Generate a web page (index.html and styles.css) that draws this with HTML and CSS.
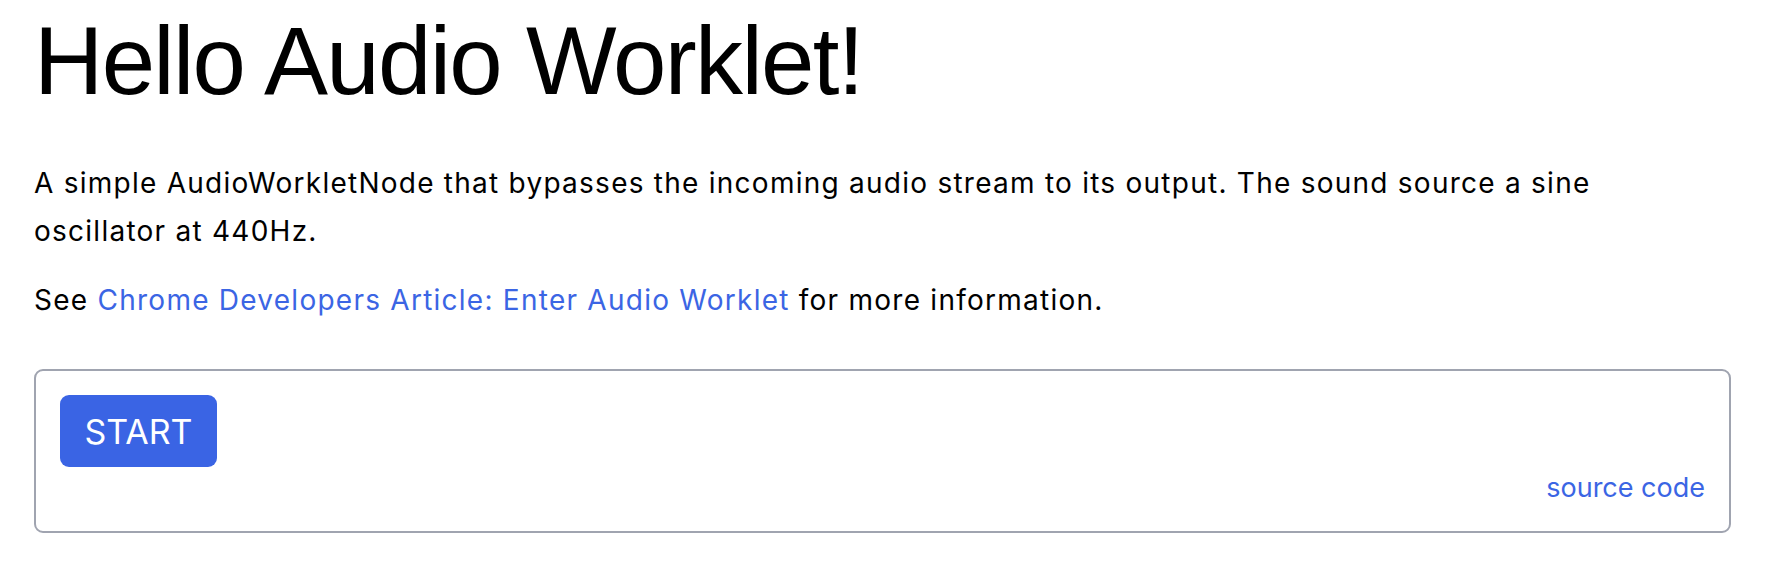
FILE: index.html
```html
<!DOCTYPE html>
<html lang="en">
<head>
<meta charset="utf-8">
<title>Hello Audio Worklet!</title>
<link rel="stylesheet" href="styles.css">
</head>
<body>
<main class="page">
  <h1 class="title">Hello Audio Worklet!</h1>
  <p class="text intro">A simple AudioWorkletNode that bypasses the incoming audio stream to its output. The sound source a sine oscillator at 440Hz.</p>
  <p class="text">See <a class="link" href="#">Chrome Developers Article: Enter Audio Worklet</a> for more information.</p>
  <section class="demo">
    <div class="controls">
      <button class="start" type="button">START</button>
    </div>
    <div class="footer">
      <a class="link source" href="#">source code</a>
    </div>
  </section>
</main>
</body>
</html>
```

FILE: styles.css
```css
html, body {
  margin: 0;
  padding: 0;
  background: #ffffff;
}

.page {
  padding: 0 35px 0 34px;
  font-family: Inter, "Noto Sans", sans-serif;
  color: #000000;
}

.title {
  font-family: "Liberation Sans", Arial, sans-serif;
  font-weight: 400;
  font-size: 96px;
  line-height: 96px;
  letter-spacing: -1.7px;
  margin: 0;
  padding-top: 13px;
}

.text {
  font-size: 28px;
  line-height: 48px;
  letter-spacing: 1.25px;
  margin: 0;
  max-width: 1640px;
}

.title + .text {
  margin-top: 50px;
}

.text + .text {
  margin-top: 21px;
}

.link {
  color: #3b65e4;
  text-decoration: none;
}

.demo {
  margin-top: 45px;
  border: 2px solid #a0a4b0;
  border-radius: 9px;
  padding: 24px 24px 26px 24px;
  display: flex;
  flex-direction: column;
}

.controls {
  display: flex;
}

.start {
  background: #3a64e4;
  color: #ffffff;
  border: none;
  border-radius: 9px;
  font-family: Inter, "Noto Sans", sans-serif;
  font-size: 34px;
  height: 72px;
  width: 157px;
  padding: 0;
}

.footer {
  display: flex;
  justify-content: flex-end;
  margin-top: 4px;
}

.source {
  font-size: 27px;
  line-height: 34px;
  letter-spacing: 0;
}
```
